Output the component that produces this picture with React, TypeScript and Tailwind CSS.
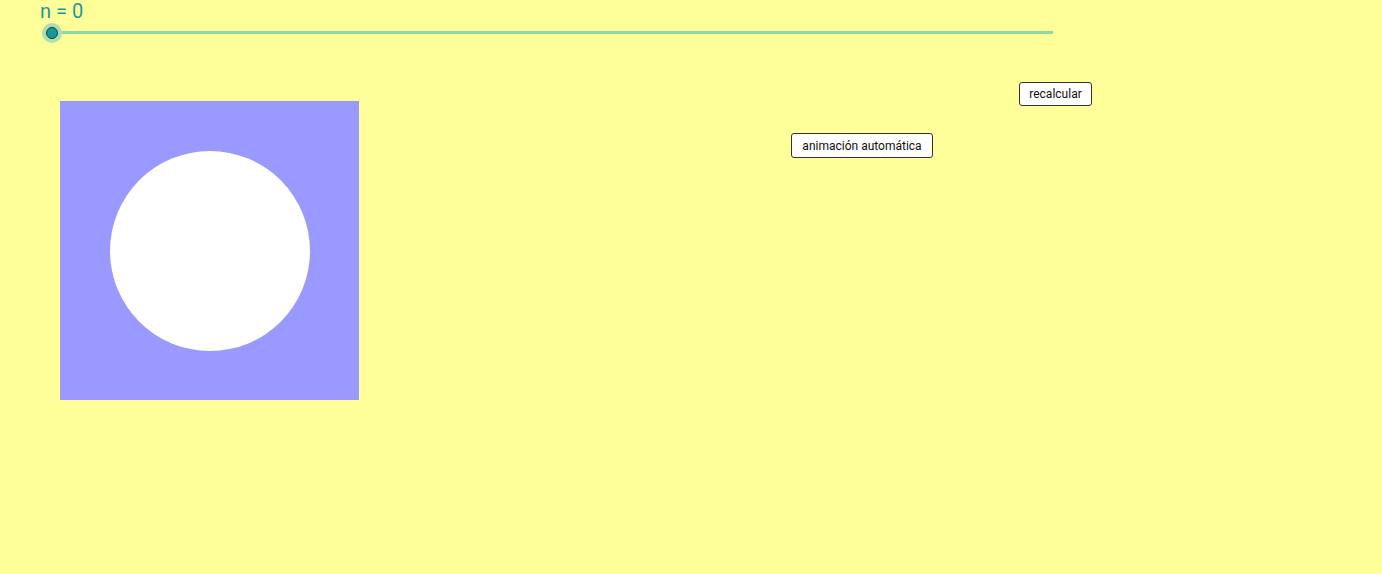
export default function App() {
  return (
    <div className="relative h-[574px] w-[1382px] overflow-hidden bg-[#ffff99] font-['Roboto',sans-serif]">
      {/* slider n */}
      <div className="absolute left-[40px] top-[-1px] text-[20px] leading-[24px] text-[#1a9a9a]">n = 0</div>
      <div className="absolute left-[52px] top-[31px] h-[3px] w-[1001px] bg-[#8fd8a0]" />
      <div className="absolute left-[42px] top-[23px] flex h-[20px] w-[20px] items-center justify-center rounded-full bg-[#a8e0b0]">
        <div className="h-[12px] w-[12px] rounded-full border-[1.5px] border-[#1f3a3a] bg-[#16999a]" />
      </div>

      {/* buttons */}
      <button className="absolute left-[1019px] top-[82px] h-[24px] w-[73px] rounded-[3px] border border-[#333] bg-white text-[12px] leading-none text-[#111]">
        recalcular
      </button>
      <button className="absolute left-[791px] top-[133px] h-[25px] w-[142px] rounded-[3px] border border-[#333] bg-white text-[12px] leading-none text-[#111]">
        animación automática
      </button>

      {/* figure */}
      <div className="absolute left-[60px] top-[101px] flex h-[299px] w-[299px] items-center justify-center bg-[#9999ff]">
        <div className="h-[200px] w-[200px] rounded-full bg-white" />
      </div>
    </div>
  );
}
